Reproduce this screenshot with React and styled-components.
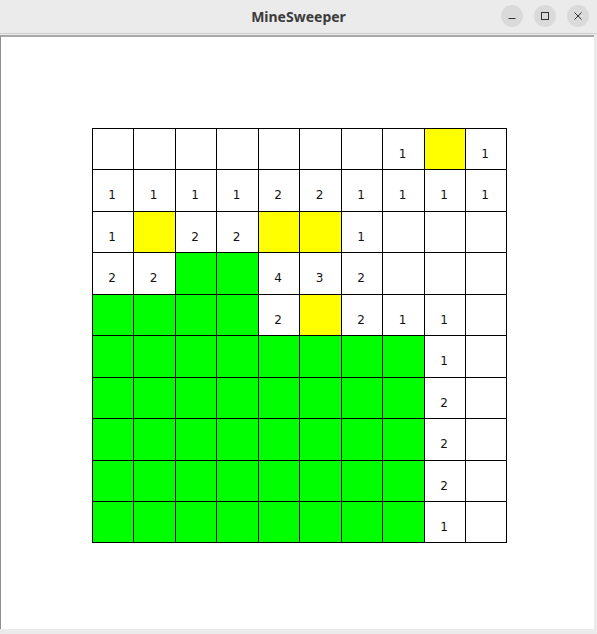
import React from "react";
import styled, { createGlobalStyle } from "styled-components";

const Global = createGlobalStyle`
  html, body { margin: 0; padding: 0; background: #ffffff; }
  #root { width: 597px; height: 634px; }
`;

const Window = styled.div`
  width: 597px;
  height: 634px;
  display: flex;
  flex-direction: column;
  background: #ebebeb;
  box-sizing: border-box;
  overflow: hidden;
`;

const TitleBar = styled.div`
  height: 33px;
  flex: none;
  position: relative;
  display: flex;
  align-items: center;
  justify-content: center;
  background: #ebebeb;
  border-bottom: 1px solid #d0d0d0;
`;

const Title = styled.div`
  font-family: "Noto Sans", "DejaVu Sans", sans-serif;
  font-weight: 700;
  font-size: 14px;
  color: #3c3c3c;
  margin-top: -1px;
`;

const Controls = styled.div`
  position: absolute;
  right: 8px;
  top: 5px;
  display: flex;
  gap: 11px;
`;

const CtrlButton = styled.div`
  width: 22px;
  height: 22px;
  border-radius: 50%;
  background: #dadada;
  display: flex;
  align-items: center;
  justify-content: center;
`;

const Content = styled.div`
  flex: 1;
  margin: 1px 3px 5px 0;
  border-top: 2px solid #a8a8a8;
  border-left: 1px solid #8e8e8e;
  background: #ffffff;
  padding: 91px 0 0 91px;
  box-sizing: border-box;
`;

const Board = styled.div`
  display: grid;
  grid-template-columns: 41px 42px 41px 42px 41px 42px 41px 42px 41px 41px;
  grid-template-rows: 41px 42px 41px 42px 41px 42px 41px 42px 41px 41px;
  border-left: 1px solid #000;
  border-top: 1px solid #000;
  width: max-content;
`;

const Cell = styled.div`
  box-sizing: border-box;
  border-right: 1px solid #000;
  border-bottom: 1px solid #000;
  background: ${(p) => (p.$kind === "Y" ? "#ffff00" : p.$kind === "G" ? "#00ff00" : "#ffffff")};
  display: flex;
  align-items: center;
  justify-content: center;
  padding-top: 9px;
  padding-right: 2px;
  font-family: "DejaVu Sans", sans-serif;
  font-size: 12px;
  color: #111;
`;

const rows = [
  "_ _ _ _ _ _ _ 1 Y 1",
  "1 1 1 1 2 2 1 1 1 1",
  "1 Y 2 2 Y Y 1 _ _ _",
  "2 2 G G 4 3 2 _ _ _",
  "G G G G 2 Y 2 1 1 _",
  "G G G G G G G G 1 _",
  "G G G G G G G G 2 _",
  "G G G G G G G G 2 _",
  "G G G G G G G G 2 _",
  "G G G G G G G G 1 _",
].map((r) => r.split(" "));

export default function App() {
  return (
    <>
      <Global />
      <Window>
        <TitleBar>
          <Title>MineSweeper</Title>
          <Controls>
            <CtrlButton>
              <svg width="10" height="10" viewBox="0 0 10 10">
                <line x1="1.5" y1="7.5" x2="8.5" y2="7.5" stroke="#333" strokeWidth="1" />
              </svg>
            </CtrlButton>
            <CtrlButton>
              <svg width="10" height="10" viewBox="0 0 10 10">
                <rect x="1.5" y="1.5" width="7" height="7" fill="none" stroke="#333" strokeWidth="1" />
              </svg>
            </CtrlButton>
            <CtrlButton>
              <svg width="10" height="10" viewBox="0 0 10 10">
                <path d="M1.5 1.5 L8.5 8.5 M8.5 1.5 L1.5 8.5" stroke="#333" strokeWidth="1" />
              </svg>
            </CtrlButton>
          </Controls>
        </TitleBar>
        <Content>
          <Board>
            {rows.flatMap((r, i) =>
              r.map((v, j) => (
                <Cell key={`${i}-${j}`} $kind={v}>
                  {/[0-9]/.test(v) ? v : ""}
                </Cell>
              ))
            )}
          </Board>
        </Content>
      </Window>
    </>
  );
}
